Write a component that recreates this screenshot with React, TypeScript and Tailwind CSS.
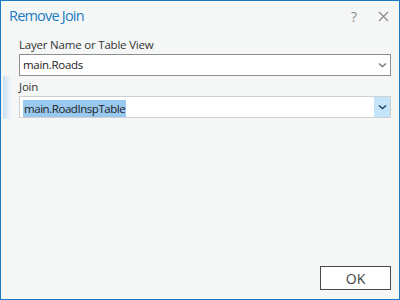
import React from 'react';

function Chevron({ className }: { className: string }) {
  return (
    <svg width="9" height="6" viewBox="0 0 9 6" className={className}>
      <path d="M1 1.5 L4.5 4.5 L8 1.5" fill="none" stroke="currentColor" strokeWidth="1.4" />
    </svg>
  );
}

export default function App() {
  return (
    <div
      className="flex h-[300px] w-[400px] flex-col border border-[#1a79c6] bg-[#f5f7f7] text-[#222]"
      style={{ fontFamily: '"Open Sans", "Noto Sans", sans-serif' }}
    >
      <div className="flex h-[31px] items-center pl-[8px] pr-[10px]">
        <span className="flex-1 text-[14.5px] leading-none tracking-[-0.8px] text-[#1b7bc4]">Remove Join</span>
        <span className="mr-[21px] text-[14px] text-[#8a8a8a]">?</span>
        <svg width="11" height="11" viewBox="0 0 11 11" className="text-[#8a8a8a]">
          <path d="M1 1 L10 10 M10 1 L1 10" stroke="currentColor" strokeWidth="1.2" />
        </svg>
      </div>

      <div className="mt-[5px] flex flex-col pl-[18px] pr-[8px]">
        <label className="text-[11.5px] leading-[16px] tracking-[-0.2px] text-[#333]">Layer Name or Table View</label>
        <div className="mt-[1px] flex h-[22px] items-center border border-[#8e8e8e] bg-white pl-[3px] pr-[3px]">
          <span className="flex-1 text-[11.5px] tracking-[-0.3px] text-[#222]">main.Roads</span>
          <Chevron className="text-[#777]" />
        </div>
      </div>

      <div className="relative flex flex-col pl-[18px] pr-[8px] pt-[3px]">
        <div className="absolute left-[2px] top-0 h-[43px] w-[8px] bg-gradient-to-r from-[#c5e0f4] to-transparent" />
        <label className="text-[11.5px] leading-[16px] tracking-[-0.2px] text-[#333]">Join</label>
        <div className="mt-[1px] flex h-[22px] items-center border border-[#d0d0d0] bg-white pl-[3px]">
          <span className="flex-1">
            <span className="inline-block bg-[#99c9ef] px-[1px] text-[11.5px] leading-[17px] tracking-[-0.45px] text-[#222]">
              main.RoadInspTable
            </span>
          </span>
          <div className="flex h-full w-[16px] items-center justify-center bg-[#c4e5f9]">
            <Chevron className="text-[#1f3f66]" />
          </div>
        </div>
      </div>

      <div className="flex-1" />

      <div className="flex justify-end pb-[9px] pr-[8px]">
        <button className="h-[24px] w-[71px] border border-[#4a4a4a] bg-white text-[14px] text-[#444]">OK</button>
      </div>
    </div>
  );
}
